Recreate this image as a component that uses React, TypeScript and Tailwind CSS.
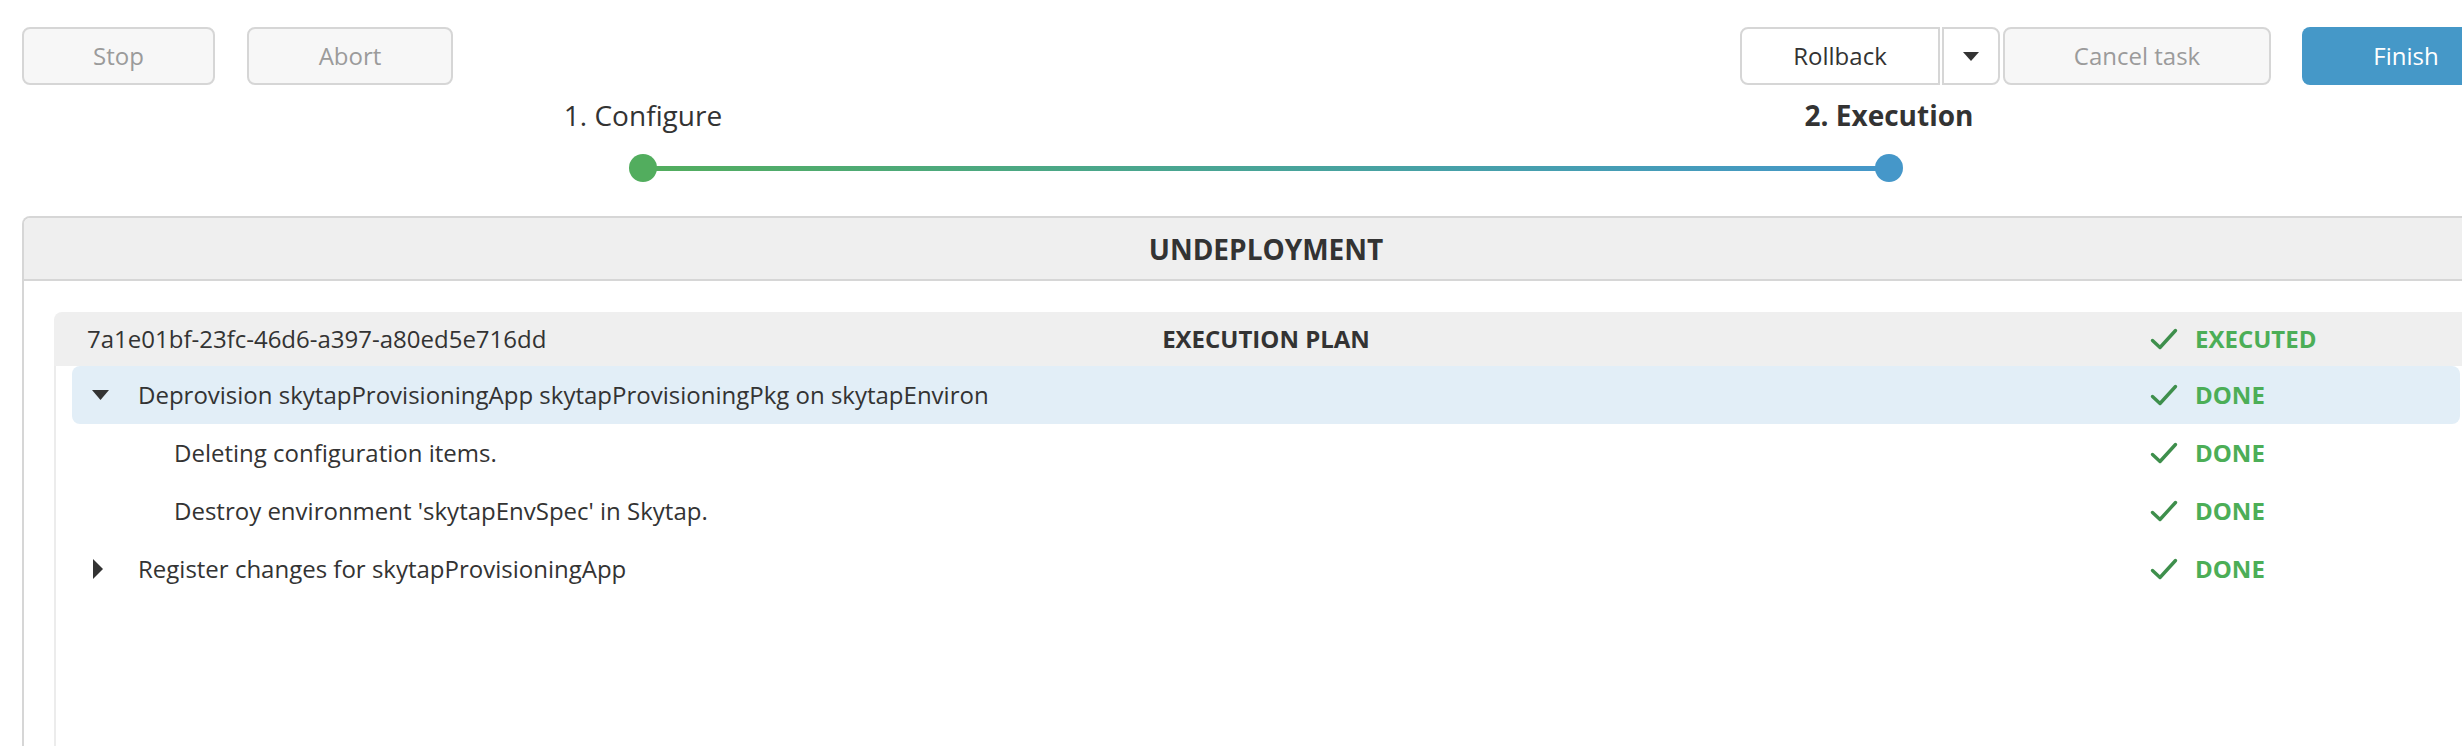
import React from "react";

function Check() {
  return (
    <svg width="28" height="22" viewBox="0 0 28 22" className="shrink-0">
      <polyline points="2.5,12.5 10,19.5 25.5,2.5" fill="none" stroke="#3e8f4c" strokeWidth="3.4" strokeLinecap="round" strokeLinejoin="round" />
    </svg>
  );
}

function Status({ label, w }: { label: string; w: string }) {
  return (
    <div className={`${w} flex items-center gap-[17px] shrink-0`}>
      <Check />
      <span className="text-[24px] font-bold text-[#4cae57] leading-none">{label}</span>
    </div>
  );
}

function DownTri() {
  return (
    <svg width="17" height="10" viewBox="0 0 17 10">
      <polygon points="0,0 17,0 8.5,10" fill="#333" />
    </svg>
  );
}

function RightTri() {
  return (
    <svg width="10" height="20" viewBox="0 0 10 20">
      <polygon points="0,0 10,10 0,20" fill="#333" />
    </svg>
  );
}

export default function App() {
  const grayBtn =
    "h-[58px] rounded-[8px] border-2 border-[#d6d6d6] bg-[#f7f7f7] text-[24px] text-[#9b9b9b]";
  return (
    <div className="w-[2462px] h-[746px] overflow-hidden bg-white font-['Open_Sans',sans-serif] text-[#333]">
      <div className="w-[2532px] px-[22px] pt-[27px]">
        {/* top buttons */}
        <div className="flex justify-between h-[58px]">
          <div className="flex gap-[32px]">
            <button className={`${grayBtn} w-[193px]`}>Stop</button>
            <button className={`${grayBtn} w-[206px]`}>Abort</button>
          </div>
          <div className="flex">
            <button className="w-[200px] h-[58px] rounded-l-[8px] border-2 border-[#d6d6d6] bg-white text-[24px] text-[#333]">
              Rollback
            </button>
            <button className="ml-[2px] w-[58px] h-[58px] rounded-r-[8px] border-2 border-[#d6d6d6] bg-white flex items-center justify-center">
              <svg width="16" height="9" viewBox="0 0 16 9">
                <polygon points="0,0 16,0 8,9" fill="#333" />
              </svg>
            </button>
            <button className={`${grayBtn} ml-[3px] w-[268px]`}>Cancel task</button>
            <button className="ml-[31px] w-[208px] h-[58px] rounded-[8px] bg-[#4598c8] text-[24px] text-white">
              Finish
            </button>
          </div>
        </div>

        {/* stepper */}
        <div className="mx-auto w-[1274px] mt-[11px]">
          <div className="flex justify-between h-[38px]">
            <div className="w-[28px] flex justify-center whitespace-nowrap text-[28px] leading-[38px] text-[#333]">
              1. Configure
            </div>
            <div className="w-[28px] flex justify-center whitespace-nowrap text-[28px] leading-[38px] font-bold text-[#333]">
              2. Execution
            </div>
          </div>
          <div className="mt-[20px] flex items-center h-[28px]">
            <div className="w-[28px] h-[28px] rounded-full bg-[#52ad5e] shrink-0" />
            <div className="flex-1 h-[5px] -mx-[2px] bg-gradient-to-r from-[#52ad5e] to-[#4597c9]" />
            <div className="w-[28px] h-[28px] rounded-full bg-[#4597c9] shrink-0" />
          </div>
        </div>

        {/* panel */}
        <div className="mt-[34px] h-[530px] border-2 border-b-0 border-[#d6d6d6] rounded-t-[8px] flex flex-col">
          <div className="h-[63px] shrink-0 border-b-2 border-[#d6d6d6] bg-[#efefef] rounded-t-[6px] flex items-center justify-center text-[28px] font-bold text-[#333]">
            UNDEPLOYMENT
          </div>
          <div className="flex-1 px-[30px] pt-[31px] flex flex-col">
            <div className="grid grid-cols-[1fr_auto_1fr] items-center h-[54px] bg-[#efefef] rounded-t-[8px] shrink-0">
              <div className="pl-[33px] text-[24px] text-[#333] whitespace-nowrap">
                7a1e01bf-23fc-46d6-a397-a80ed5e716dd
              </div>
              <div className="text-[24px] font-bold text-[#333] whitespace-nowrap">EXECUTION PLAN</div>
              <div className="flex justify-end">
                <Status label="EXECUTED" w="w-[328px]" />
              </div>
            </div>
            <div className="flex-1 border-l-2 border-[#ececec] pl-[16px] pr-[18px]">
              <div className="h-[58px] flex items-center bg-[#e2eef7] rounded-[8px]">
                <div className="w-[66px] pl-[20px] shrink-0 flex items-center">
                  <DownTri />
                </div>
                <div className="flex-1 text-[24px] whitespace-nowrap">
                  Deprovision skytapProvisioningApp skytapProvisioningPkg on skytapEnviron
                </div>
                <Status label="DONE" w="w-[310px]" />
              </div>
              <div className="h-[58px] flex items-center">
                <div className="flex-1 pl-[102px] text-[24px] whitespace-nowrap">Deleting configuration items.</div>
                <Status label="DONE" w="w-[310px]" />
              </div>
              <div className="h-[58px] flex items-center">
                <div className="flex-1 pl-[102px] text-[24px] whitespace-nowrap">
                  Destroy environment 'skytapEnvSpec' in Skytap.
                </div>
                <Status label="DONE" w="w-[310px]" />
              </div>
              <div className="h-[58px] flex items-center">
                <div className="w-[66px] pl-[21px] shrink-0 flex items-center">
                  <RightTri />
                </div>
                <div className="flex-1 text-[24px] whitespace-nowrap">Register changes for skytapProvisioningApp</div>
                <Status label="DONE" w="w-[310px]" />
              </div>
            </div>
          </div>
        </div>
      </div>
    </div>
  );
}
